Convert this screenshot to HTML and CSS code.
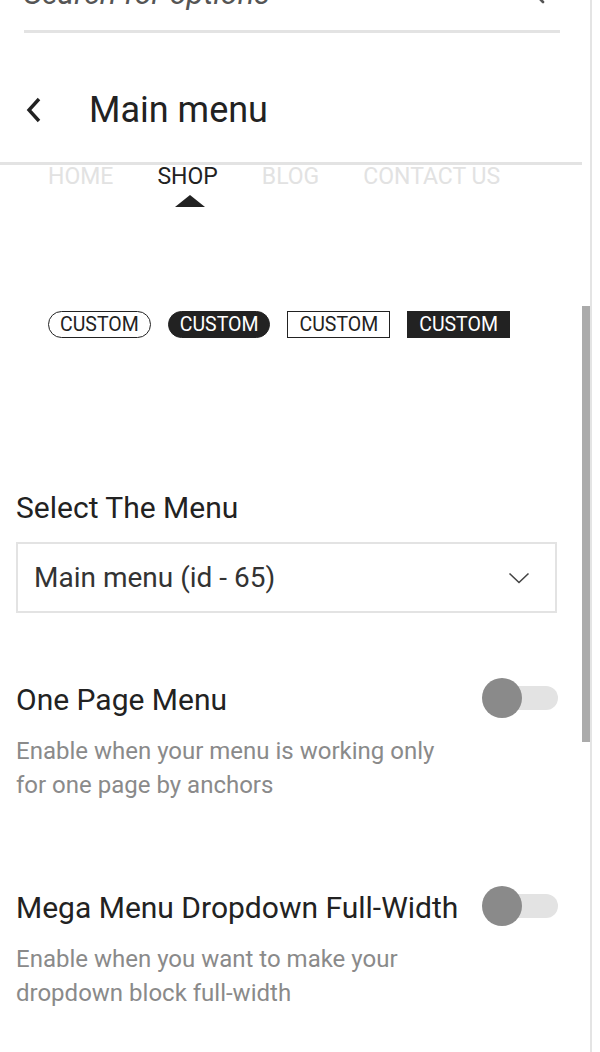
FILE: index.html
```html
<!DOCTYPE html>
<html>
<head>
<meta charset="utf-8">
<link rel="stylesheet" href="styles.css">
</head>
<body>
<div class="panel">
  <div class="search">
    <span class="search-text">Search for options</span>
    <svg class="search-icon" width="24" height="24" viewBox="0 0 24 24"><circle cx="9" cy="9" r="7" fill="none" stroke="#555" stroke-width="2.4"/><line x1="14" y1="14" x2="21" y2="21" stroke="#555" stroke-width="2.6" stroke-linecap="round"/></svg>
  </div>
  <div class="header">
    <svg class="back" width="20" height="28" viewBox="0 0 20 28"><polyline points="15,3 5,14 15,25" fill="none" stroke="#222" stroke-width="3.4"/></svg>
    <h1 class="title">Main menu</h1>
  </div>
  <div class="scroll">
    <div class="content">
      <div class="preview">
        <nav class="nav">
          <span class="nav-item">Home</span>
          <span class="nav-item active">Shop</span>
          <span class="nav-item">Blog</span>
          <span class="nav-item">Contact us</span>
        </nav>
        <div class="arrow-row"><span class="arrow"></span></div>
        <div class="buttons">
          <span class="btn pill-outline">Custom</span>
          <span class="btn pill-fill">Custom</span>
          <span class="btn rect-outline">Custom</span>
          <span class="btn rect-fill">Custom</span>
        </div>
      </div>
      <div class="field">
        <div class="label">Select The Menu</div>
        <div class="select">
          <span class="select-value">Main menu (id - 65)</span>
          <svg width="22" height="12" viewBox="0 0 22 12"><polyline points="1.5,1.5 11,10.5 20.5,1.5" fill="none" stroke="#444" stroke-width="1.6"/></svg>
        </div>
      </div>
      <div class="option first">
        <div class="option-row">
          <div class="label">One Page Menu</div>
          <span class="toggle"></span>
        </div>
        <p class="desc">Enable when your menu is working only<br>for one page by anchors</p>
      </div>
      <div class="option">
        <div class="option-row">
          <div class="label">Mega Menu Dropdown Full-Width</div>
          <span class="toggle"></span>
        </div>
        <p class="desc">Enable when you want to make your<br>dropdown block full-width</p>
      </div>
    </div>
    <div class="scrollbar"><div class="thumb"></div></div>
  </div>
</div>
</body>
</html>
```

FILE: styles.css
```css
* { box-sizing: border-box; }
html, body { margin: 0; padding: 0; background: #fff; }
body { font-family: Roboto, "Noto Sans", sans-serif; color: #222; overflow: hidden; }

.panel {
  width: 592px;
  height: 1052px;
  border-right: 2px solid #e4e4e4;
  overflow: hidden;
}

.search {
  margin: -21px 30px 0 24px;
  height: 54px;
  border-bottom: 3px solid #e3e3e3;
  display: flex;
  justify-content: space-between;
  align-items: flex-start;
}
.search-text {
  font-style: italic;
  font-size: 31px;
  line-height: 30px;
  color: #555;
}
.search-icon { margin-top: 2px; margin-right: 14px; }

.header {
  height: 129px;
  display: flex;
  align-items: center;
  padding: 25px 0 0 24px;
}
.back { margin-right: 45px; }
.title {
  margin: 0;
  font-size: 36px;
  font-weight: 400;
  line-height: 40px;
  color: #222;
}

.scroll {
  display: flex;
  height: 900px;
}
.content {
  width: 582px;
  border-top: 3px solid #e3e3e3;
  padding: 0 24px 0 16px;
}
.scrollbar {
  width: 8px;
  padding-top: 144px;
}
.thumb {
  height: 436px;
  background: #ababab;
}

.preview { padding-left: 10px; padding-top: 1px; }
.nav {
  display: flex;
  gap: 44px;
  padding-left: 22px;
  height: 22px;
}
.nav-item {
  font-size: 23px;
  line-height: 22px;
  text-transform: uppercase;
  color: #e2e2e2;
}
.nav-item.active { color: #222; }
.arrow-row {
  padding-left: 149px;
  margin-top: 7px;
  height: 12px;
}
.arrow {
  display: block;
  width: 0;
  height: 0;
  border-left: 15px solid transparent;
  border-right: 15px solid transparent;
  border-bottom: 12px solid #222;
}
.buttons {
  display: flex;
  gap: 17px;
  margin-top: 104px;
  padding-left: 22px;
}
.btn {
  display: inline-flex;
  align-items: center;
  height: 27px;
  padding: 0 11px;
  font-size: 19.5px;
  text-transform: uppercase;
  border: 1px solid #222;
  color: #222;
}
.pill-outline, .pill-fill { border-radius: 14px; }
.pill-fill, .rect-fill { background: #222; color: #fff; }

.field { margin-top: 154px; }
.label {
  font-size: 30px;
  line-height: 32px;
  color: #222;
}
.select {
  margin-top: 18px;
  width: 541px;
  height: 71px;
  border: 2px solid #e3e3e3;
  display: flex;
  align-items: center;
  justify-content: space-between;
  padding: 0 25px 0 16px;
}
.select-value {
  font-size: 28px;
  color: #333;
}

.option { margin-top: 90px; width: 542px; }
.option.first { margin-top: 71px; }
.option-row {
  display: flex;
  align-items: center;
  justify-content: space-between;
  height: 32px;
}
.toggle {
  position: relative;
  width: 76px;
  height: 40px;
  margin-top: -4px;
}
.toggle::before {
  content: "";
  position: absolute;
  left: 6px;
  right: 0;
  top: 8px;
  height: 24px;
  border-radius: 12px;
  background: #e3e3e3;
}
.toggle::after {
  content: "";
  position: absolute;
  left: 0;
  top: 0;
  width: 40px;
  height: 40px;
  border-radius: 50%;
  background: #8a8a8a;
}
.desc {
  margin: 18px 0 0;
  font-size: 24px;
  line-height: 34px;
  color: #8a8a8a;
}
```
